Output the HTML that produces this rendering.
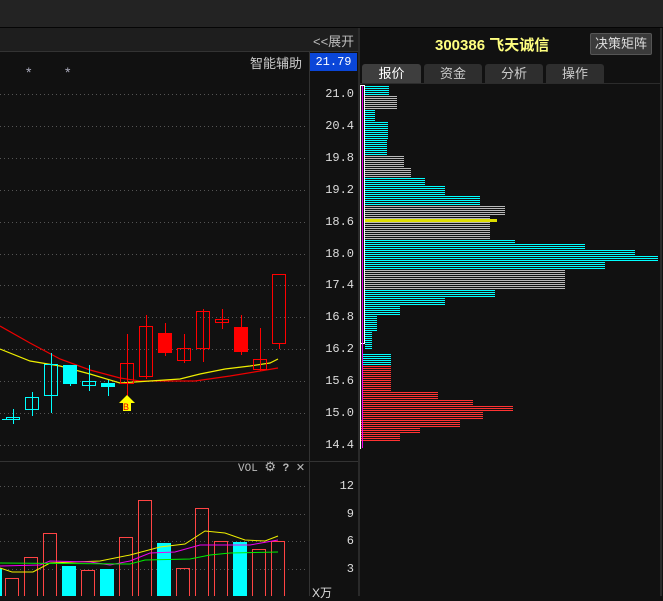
<!DOCTYPE html><html><head><meta charset="utf-8"><style>
body{margin:0;width:663px;height:596px;background:#111;overflow:hidden;font-family:"Liberation Sans","Noto Sans CJK SC",sans-serif;position:relative}
.a{position:absolute}
.ax{font-family:"Liberation Mono",monospace;font-size:12px;color:#ddd;text-align:right;width:40px}
</style></head><body>
<div class="a" style="left:0;top:0;width:663px;height:27px;background:#232323"></div>
<div class="a" style="left:0;top:27px;width:663px;height:1px;background:#050505"></div>
<div class="a" style="left:0;top:28px;width:358px;height:23px;background:#1e1e1e;border-bottom:1px solid #333"></div>
<div class="a" style="left:313px;top:31px;font-size:13px;color:#bbb">&lt;&lt;展开</div>
<div class="a" style="left:358px;top:28px;width:2px;height:568px;background:#2a2a2a"></div>
<div class="a" style="left:660px;top:28px;width:2px;height:568px;background:#2a2a2a"></div>
<div class="a" style="left:309px;top:52px;width:1px;height:544px;background:#333"></div>
<div class="a" style="left:0;top:461px;width:358px;height:1px;background:#333"></div>
<div class="a" style="left:310px;top:53px;width:47px;height:18px;background:#0a46d8;color:#fff;font-family:'Liberation Mono',monospace;font-size:12px;line-height:18px;text-align:center">21.79</div>
<div class="a" style="left:250px;top:53px;font-size:13px;color:#ccc">智能辅助</div>
<div class="a" style="left:26px;top:64px;font-size:14px;color:#aab">*</div>
<div class="a" style="left:65px;top:64px;font-size:14px;color:#aab">*</div>
<div class="a ax" style="left:314px;top:87px">21.0</div>
<div class="a ax" style="left:314px;top:119px">20.4</div>
<div class="a ax" style="left:314px;top:151px">19.8</div>
<div class="a ax" style="left:314px;top:183px">19.2</div>
<div class="a ax" style="left:314px;top:215px">18.6</div>
<div class="a ax" style="left:314px;top:247px">18.0</div>
<div class="a ax" style="left:314px;top:278px">17.4</div>
<div class="a ax" style="left:314px;top:310px">16.8</div>
<div class="a ax" style="left:314px;top:342px">16.2</div>
<div class="a ax" style="left:314px;top:374px">15.6</div>
<div class="a ax" style="left:314px;top:406px">15.0</div>
<div class="a ax" style="left:314px;top:438px">14.4</div>
<div class="a ax" style="left:314px;top:479px">12</div>
<div class="a ax" style="left:314px;top:507px">9</div>
<div class="a ax" style="left:314px;top:534px">6</div>
<div class="a ax" style="left:314px;top:562px">3</div>
<div class="a" style="left:312px;top:584px;font-size:12px;color:#ddd">X万</div>
<div class="a" style="left:238px;top:460px;font-family:'Liberation Mono',monospace;font-size:11px;color:#bbb">VOL <span style="font-size:13px">⚙</span> <b>?</b> ✕</div>

<svg class="a" style="left:0;top:0" width="358" height="596">
<g stroke="#555" stroke-dasharray="1 3" stroke-width="1" shape-rendering="crispEdges">
<path d="M0 94.5H308M0 126.5H308M0 158.5H308M0 190.5H308M0 222.5H308M0 254.5H308M0 285.5H308M0 317.5H308M0 349.5H308M0 381.5H308M0 413.5H308M0 445.5H308M0 486.5H308M0 514.5H308M0 541.5H308M0 569.5H308"/>
</g>
<polyline fill="none" stroke="#e00" stroke-width="1.2" points="0,326 30,343 60,359 90,370 120,378 140,381 195,381 230,376 260,371 278,368"/>
<polyline fill="none" stroke="#ee0" stroke-width="1.2" points="0,349 30,361 60,366 90,374 120,383 150,381 180,379 200,374 225,369 250,366 270,363 278,359"/>
<g stroke="#0ff" fill="none" shape-rendering="crispEdges">
<path d="M2 419.5H6M13.5 409V424M6.5 417.5h13v2h-13z"/>
<path d="M32.5 392V416M25.5 397.5h13v12h-13z"/>
<path d="M51.5 353V413M44.5 364.5h13v31h-13z"/>
<path d="M70.5 365V386"/><rect x="63" y="365" width="14" height="19" fill="#0ff" stroke="none"/>
<path d="M89.5 365V391M82.5 381.5h13v4h-13z"/>
<path d="M108.5 380V396"/><rect x="101" y="383" width="14" height="4" fill="#0ff" stroke="none"/>
</g>
<g stroke="#f00" fill="none" shape-rendering="crispEdges">
<path d="M127.5 334V400M120.5 363.5h13v20h-13z"/>
<path d="M146.5 315V379M139.5 326.5h13v50h-13z"/>
<path d="M165.5 323V356"/><rect x="158" y="333" width="14" height="20" fill="#f00" stroke="none"/>
<path d="M184.5 334V363M177.5 348.5h13v12h-13z"/>
<path d="M203.5 309V362M196.5 311.5h13v37h-13z"/>
<path d="M222.5 309V329M215.5 319.5h13v3h-13z"/>
<path d="M241.5 315V355"/><rect x="234" y="327" width="14" height="25" fill="#f00" stroke="none"/>
<path d="M260.5 328V371M253.5 359.5h13v10h-13z"/>
<path d="M279.5 343V349M272.5 274.5h13v69h-13z"/>
</g>
<path d="M127 395L135 403H131V411H123V403H119Z" fill="#ff0"/>
<text x="123" y="410" font-size="9" fill="#e00" font-family="Liberation Sans">B</text>
<g fill="#0ff"><rect x="0" y="568" width="2" height="28"/><rect x="62" y="566" width="14" height="30"/><rect x="100" y="569" width="14" height="27"/><rect x="157" y="543" width="14" height="53"/><rect x="233" y="542" width="14" height="54"/></g>
<g fill="none" stroke="#f44" shape-rendering="crispEdges">
<rect x="5.5" y="578.5" width="13" height="20"/><rect x="24.5" y="557.5" width="13" height="40"/><rect x="43.5" y="533.5" width="13" height="64"/><rect x="81.5" y="570.5" width="13" height="30"/><rect x="119.5" y="537.5" width="13" height="60"/><rect x="138.5" y="500.5" width="13" height="97"/><rect x="176.5" y="568.5" width="13" height="30"/><rect x="195.5" y="508.5" width="13" height="90"/><rect x="214.5" y="541.5" width="13" height="57"/><rect x="252.5" y="549.5" width="13" height="50"/><rect x="271.5" y="541.5" width="13" height="57"/></g>
<polyline fill="none" stroke="#ee0" points="0,568 12,572 33,572 50,563 100,561 130,555 160,547 185,544 205,531 225,533 245,540 265,541 278,536"/>
<polyline fill="none" stroke="#e0e" points="0,566 40,565 50,561 90,562 110,565 130,561 150,553 175,552 200,545 250,545 278,540"/>
<polyline fill="none" stroke="#0e0" points="0,563 130,564 145,560 190,559 210,555 230,553 278,552"/>
</svg>

<div class="a" style="left:435px;top:34px;font-size:15px;font-weight:bold;color:#ffff80">300386 飞天诚信</div>
<div class="a" style="left:590px;top:33px;width:60px;height:20px;background:#3a3a3a;border:1px solid #555;border-radius:2px;color:#ddd;font-size:13px;line-height:20px;text-align:center">决策矩阵</div>
<div class="a" style="left:360px;top:83px;width:300px;height:1px;background:#2c2c2c"></div>
<div class="a" style="left:362px;top:64px;width:59px;height:19px;background:#3e3e3e;color:#fff;font-size:13px;line-height:19px;text-align:center;border-radius:3px 3px 0 0">报价</div>
<div class="a" style="left:424px;top:64px;width:58px;height:19px;background:#2e2e2e;color:#ccc;font-size:13px;line-height:19px;text-align:center;border-radius:3px 3px 0 0">资金</div>
<div class="a" style="left:485px;top:64px;width:58px;height:19px;background:#2e2e2e;color:#ccc;font-size:13px;line-height:19px;text-align:center;border-radius:3px 3px 0 0">分析</div>
<div class="a" style="left:546px;top:64px;width:58px;height:19px;background:#2e2e2e;color:#ccc;font-size:13px;line-height:19px;text-align:center;border-radius:3px 3px 0 0">操作</div>

<svg class="a" style="left:360px;top:84px" width="300" height="370" shape-rendering="crispEdges">
<defs>
<pattern id="c" width="4" height="2" patternUnits="userSpaceOnUse"><rect width="4" height="1" fill="#0ff"/></pattern>
<pattern id="g" width="4" height="2" patternUnits="userSpaceOnUse"><rect width="4" height="1" fill="#b8b8b8"/></pattern>
<pattern id="r" width="4" height="2" patternUnits="userSpaceOnUse"><rect width="4" height="1" fill="#f33"/></pattern>
</defs>
<g transform="translate(-360,-84)">
<rect x="365" y="86" width="24" height="10" fill="url(#c)"/>
<rect x="365" y="96" width="32" height="14" fill="url(#g)"/>
<rect x="365" y="110" width="10" height="12" fill="url(#c)"/>
<rect x="365" y="122" width="23" height="18" fill="url(#c)"/>
<rect x="365" y="140" width="22" height="15" fill="url(#c)"/>
<rect x="365" y="155" width="39" height="13" fill="url(#g)"/>
<rect x="365" y="168" width="46" height="10" fill="url(#g)"/>
<rect x="365" y="178" width="60" height="8" fill="url(#c)"/>
<rect x="365" y="186" width="80" height="10" fill="url(#c)"/>
<rect x="365" y="196" width="115" height="9" fill="url(#c)"/>
<rect x="365" y="205" width="140" height="10" fill="url(#g)"/>
<rect x="365" y="215" width="125" height="4" fill="url(#g)"/>
<rect x="365" y="219" width="132" height="3" fill="#dd0"/>
<rect x="365" y="222" width="125" height="18" fill="url(#g)"/>
<rect x="365" y="240" width="150" height="4" fill="url(#c)"/>
<rect x="365" y="244" width="220" height="6" fill="url(#c)"/>
<rect x="365" y="250" width="270" height="6" fill="url(#c)"/>
<rect x="365" y="256" width="293" height="6" fill="url(#c)"/>
<rect x="365" y="262" width="240" height="8" fill="url(#c)"/>
<rect x="365" y="270" width="200" height="20" fill="url(#g)"/>
<rect x="365" y="290" width="130" height="7" fill="url(#c)"/>
<rect x="365" y="297" width="80" height="8" fill="url(#c)"/>
<rect x="365" y="305" width="35" height="10" fill="url(#c)"/>
<rect x="365" y="315" width="12" height="17" fill="url(#c)"/>
<rect x="365" y="332" width="7" height="18" fill="url(#c)"/>
<rect x="363" y="353" width="28" height="12" fill="url(#c)"/>
<rect x="363" y="365" width="28" height="13" fill="url(#r)"/>
<rect x="363" y="378" width="28" height="14" fill="url(#r)"/>
<rect x="363" y="392" width="75" height="8" fill="url(#r)"/>
<rect x="363" y="400" width="110" height="6" fill="url(#r)"/>
<rect x="363" y="406" width="150" height="6" fill="url(#r)"/>
<rect x="363" y="412" width="120" height="8" fill="url(#r)"/>
<rect x="360" y="420" width="100" height="8" fill="url(#r)"/>
<rect x="360" y="428" width="60" height="6" fill="url(#r)"/>
<rect x="360" y="434" width="40" height="7" fill="url(#r)"/>
<rect x="360.5" y="85.5" width="4" height="258" fill="none" stroke="#fff"/>
<rect x="362" y="86" width="1" height="362" fill="#e0e"/>
<rect x="360" y="343" width="1" height="106" fill="#fff"/>
</g>
</svg>
</body></html>
